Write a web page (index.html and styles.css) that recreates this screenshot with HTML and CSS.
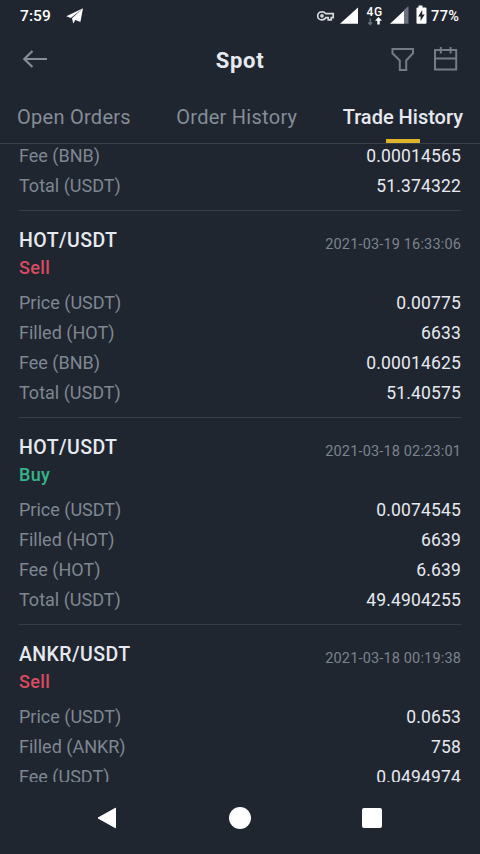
FILE: index.html
```html
<!DOCTYPE html>
<html lang="en">
<head>
<meta charset="utf-8">
<title>Spot</title>
<link rel="stylesheet" href="styles.css">
</head>
<body>
<div class="screen">
  <div class="status">
    <span class="clock">7:59</span>
    <svg class="plane" width="18" height="16" viewBox="0 0 18 16"><path d="M17 .3 .3 8.300l4.500 1.700z M17 .3 6 10.300l1.200 5.200 2.200-3.500 5 2z" fill="#fff"/></svg>
    <svg class="signals" width="112" height="22" viewBox="0 0 112 22">
      <g fill="none" stroke="#d5d8dc" stroke-width="1.7"><path d="M8.8 8.7C7.7 7.3 6.1 6.8 4.7 6.9a4 4 0 0 0 0 8c1.6 0 3.2-.7 4.1-2.2h2.4v2.2h3v-2.2h2V8.7z"/><circle cx="5" cy="10.8" r="1"/></g>
      <path d="M23 18.800 41 2.500v16.300z" fill="#fff"/>
      <path d="M53.200 13.500v6m-2-2 2 2 2-2" stroke="#66707b" stroke-width="1.500" fill="none"/>
      <path d="m61.500 12 3.500 3.800h-2.300v3.700h-2.400v-3.700h-2.300z" fill="#fff"/>
      <text x="49.500" y="10.800" class="network">4G</text>
      <path d="M87 4.800 91.500 1v17.800H87z" fill="#69717c"/>
      <path d="M73 18.800 87 5.700v13.100z" fill="#fff"/>
      <path d="M101.500 2.500v-2h4v2h3q1 0 1 1v14.300q0 1-1 1h-8q-1 0-1-1V3.500q0-1 1-1z" fill="#fff"/>
      <path d="m105.200 5-4 6.500h2.400v4.500l4.100-6.600h-2.500z" fill="#20262f"/>
    </svg>
    <span class="battery">77%</span>
  </div>
  <header class="bar">
    <svg class="back" width="26" height="20" viewBox="0 0 26 20"><path d="M25 10H2M10.500 2 2.300 10l8.200 8" fill="none" stroke="#858d98" stroke-width="2.200"/></svg>
    <h1>Spot</h1>
    <div class="tools">
      <svg width="24" height="26" viewBox="0 0 24 26"><path d="M1.500 3H22v4.300l-6.800 7.200V24H8.800v-9.500L1.500 7.300z" fill="none" stroke="#747c87" stroke-width="2"/></svg>
      <svg width="24" height="26" viewBox="0 0 24 26"><path d="M1 4h21.200v19.500H1zM1 12.500h21.200M6.800 1v6.500M16.600 1v6.500" fill="none" stroke="#747c87" stroke-width="2"/></svg>
    </div>
  </header>
  <nav class="tabs">
    <span class="tab open">Open Orders</span>
    <span class="tab orders">Order History</span>
    <span class="tab active">Trade History</span>
  </nav>
  <main class="list">
    <section class="trade partial">
      <div class="row"><span class="label">Fee (BNB)</span><span class="value">0.00014565</span></div>
      <div class="row"><span class="label">Total (USDT)</span><span class="value">51.374322</span></div>
    </section>
    <section class="trade">
      <div class="head"><h2>HOT/USDT</h2><time>2021-03-19 16:33:06</time></div>
      <div class="side sell">Sell</div>
      <div class="row"><span class="label">Price (USDT)</span><span class="value">0.00775</span></div>
      <div class="row"><span class="label">Filled (HOT)</span><span class="value">6633</span></div>
      <div class="row"><span class="label">Fee (BNB)</span><span class="value">0.00014625</span></div>
      <div class="row"><span class="label">Total (USDT)</span><span class="value">51.40575</span></div>
    </section>
    <section class="trade">
      <div class="head"><h2>HOT/USDT</h2><time>2021-03-18 02:23:01</time></div>
      <div class="side buy">Buy</div>
      <div class="row"><span class="label">Price (USDT)</span><span class="value">0.0074545</span></div>
      <div class="row"><span class="label">Filled (HOT)</span><span class="value">6639</span></div>
      <div class="row"><span class="label">Fee (HOT)</span><span class="value">6.639</span></div>
      <div class="row"><span class="label">Total (USDT)</span><span class="value">49.4904255</span></div>
    </section>
    <section class="trade">
      <div class="head"><h2>ANKR/USDT</h2><time>2021-03-18 00:19:38</time></div>
      <div class="side sell">Sell</div>
      <div class="row"><span class="label">Price (USDT)</span><span class="value">0.0653</span></div>
      <div class="row"><span class="label">Filled (ANKR)</span><span class="value">758</span></div>
      <div class="row"><span class="label">Fee (USDT)</span><span class="value">0.0494974</span></div>
    </section>
  </main>
  <footer class="system">
    <svg width="24" height="24" viewBox="0 0 24 24"><path d="M19.500 2.200v19.600L2 12z" fill="#fff" stroke="#fff" stroke-width="1" stroke-linejoin="round"/></svg>
    <svg width="24" height="24" viewBox="0 0 24 24"><circle cx="12" cy="12" r="11" fill="#fff"/></svg>
    <svg width="24" height="24" viewBox="0 0 24 24"><rect x="2" y="2" width="20" height="20" rx="2" fill="#fff"/></svg>
  </footer>
</div>
</body>
</html>
```
FILE: styles.css
```css
* { box-sizing: border-box; }
body { margin: 0; background: #20262f; color: #e6e9f0; font-family: Roboto, "Noto Sans", sans-serif; }
h1, h2 { margin: 0; }
svg { display: block; flex: none; }
.screen { width: 480px; height: 854px; display: flex; flex-direction: column; overflow: hidden; }
.status { height: 32px; flex: none; display: flex; align-items: center; padding: 0 20px; color: #fff; font-size: 15.5px; font-weight: 500; }
.clock { width: 46px; letter-spacing: .1px; }
.signals { margin-left: auto; margin-top: -1px; }
.battery { width: 29px; margin-left: 2px; font-size: 14.5px; letter-spacing: .4px; white-space: nowrap; }
.network { font: 500 12px Roboto, sans-serif; letter-spacing: .6px; fill: #fff; }
.bar { height: 58px; flex: none; display: grid; grid-template-columns: 1fr auto 1fr; align-items: center; padding: 0 22px; }
.back { margin-top: -4px; }
.bar h1 { font-size: 22px; font-weight: 700; letter-spacing: .7px; line-height: 30px; }
.tools { display: flex; gap: 19px; justify-content: flex-end; margin-top: -4px; }
.tabs { height: 54px; flex: none; display: flex; justify-content: space-between; padding: 0 17px; border-bottom: 1px solid #3b424c; font-size: 20px; line-height: 54px; color: #858d98; }
.tab { white-space: nowrap; }
.open, .orders { letter-spacing: .27px; }
.active { color: #e6e9f0; font-weight: 500; position: relative; }
.active::after { content: ""; position: absolute; left: 43px; bottom: 0; width: 34px; height: 4px; background: #deb42b; }
.list { height: 638px; flex: none; overflow: hidden; padding: 0 19px; }
.trade { height: 207px; padding: 15px 0 9px; border-bottom: 1px solid #363d47; }
.partial { height: 70px; margin-top: -3px; padding-top: 0; }
.head { height: 28px; display: flex; justify-content: space-between; line-height: 30px; }
.head h2 { font-size: 19.5px; font-weight: 500; letter-spacing: .42px; }
time { font-size: 14.5px; line-height: 37px; letter-spacing: .16px; color: #7b838e; }
.side { height: 28px; margin-bottom: 6px; line-height: 28px; font-size: 18px; font-weight: 500; letter-spacing: .35px; }
.sell { color: #dc4a62; }
.buy { color: #35b58a; }
.row { height: 30px; display: flex; justify-content: space-between; line-height: 30px; }
.label { font-size: 18px; color: #7f8792; }
.value { font-size: 17.5px; letter-spacing: .17px; }
.system { height: 72px; display: flex; justify-content: space-between; align-items: center; padding: 0 96px; }
```
